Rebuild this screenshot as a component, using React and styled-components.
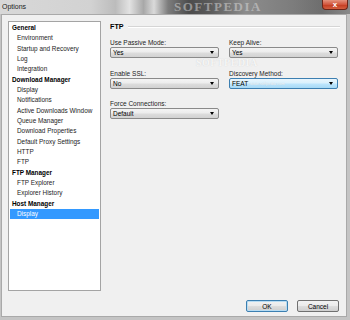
import React from 'react'
import styled, { createGlobalStyle, css } from 'styled-components'

const GlobalStyle = createGlobalStyle`
  html, body {
    margin: 0;
    padding: 0;
    background: #3b6ea8;
  }
  body {
    font-family: "Liberation Sans", Arial, sans-serif;
  }
`

const Window = styled.div`
  display: flex;
  flex-direction: column;
  width: 350px;
  height: 320px;
  background: #c4c4c4;
  overflow: hidden;
`

const TitleBar = styled.div`
  position: relative;
  display: flex;
  align-items: flex-start;
  height: 14px;
  flex-shrink: 0;
  background: linear-gradient(
    90deg,
    #d8d8d8 0,
    #d2d2d2 26%,
    #bcbcbc 33%,
    #e2e2e2 37%,
    #a8a8a8 41%,
    #dadada 44%,
    #7d7d7d 48%,
    #4c4c4c 54%,
    #5a5a5a 60%,
    #8c8c8c 70%,
    #7c7c7c 84%,
    #6e6e6e 92%,
    #8a8a8a 100%
  );
`

const Title = styled.span`
  padding: 3px 0 0 2px;
  font-size: 7px;
  line-height: 8px;
  color: #1a1a1a;
`

const TitleMark = styled.span`
  position: absolute;
  left: 174px;
  top: 0;
  font-family: "Liberation Serif", serif;
  font-size: 13px;
  line-height: 14px;
  font-weight: bold;
  letter-spacing: 1.5px;
  color: rgba(220, 220, 220, 0.5);
`

const CloseButton = styled.div`
  margin-left: auto;
  margin-right: 2px;
  width: 26px;
  height: 10px;
  display: flex;
  align-items: center;
  justify-content: center;
  background: linear-gradient(#e4937e, #d2553c 50%, #c23a1f 51%, #d35e3f);
  border: 1px solid #6d2518;
  border-top: none;
  border-radius: 0 0 4px 4px;
  box-sizing: border-box;
  color: #fff;
  font-size: 8px;
  font-weight: bold;
  line-height: 8px;
`

const Frame = styled.div`
  flex: 1;
  display: flex;
  flex-direction: column;
  background: #f0f0f0;
  margin: 0 3px 3px 1px;
  border: 1px solid #a9a9a9;
  padding: 6px 5px 0 6px;
`

const Main = styled.div`
  display: flex;
  gap: 9px;
  height: 270px;
`

const Tree = styled.div`
  width: 93px;
  box-sizing: border-box;
  background: #fff;
  border: 1px solid #a4a4a4;
  padding: 1px 1px;
`

const TreeItem = styled.div`
  height: 10.33px;
  line-height: 10.33px;
  font-size: 6.4px;
  white-space: nowrap;
  color: #1c1c1c;
  padding-left: 2px;
  ${p => p.$group && css`
    font-weight: bold;
    color: #000;
  `}
  ${p => p.$child && css`
    padding-left: 7px;
  `}
  ${p => p.$selected && css`
    background: #3399ff;
    color: #fff;
  `}
`

const Panel = styled.div`
  position: relative;
  flex: 1;
  padding-top: 1px;
`

const Heading = styled.div`
  display: flex;
  align-items: center;
  gap: 4px;
  height: 9px;
  font-size: 7.2px;
  font-weight: bold;
  color: #000;
`

const HeadingRule = styled.div`
  flex: 1;
  height: 0;
  border-top: 1px solid #d5d5d5;
  border-bottom: 1px solid #fff;
  margin-right: 1px;
`

const Fields = styled.div`
  display: grid;
  grid-template-columns: 109px 109px;
  column-gap: 10px;
  row-gap: 10.5px;
  margin-top: 7px;
`

const Field = styled.div`
  display: flex;
  flex-direction: column;
`

const Label = styled.div`
  font-size: 6.5px;
  line-height: 9px;
  color: #1c1c1c;
`

const Select = styled.div`
  display: flex;
  align-items: center;
  justify-content: space-between;
  height: 11px;
  box-sizing: border-box;
  padding: 0 4px 0 2px;
  border: 1px solid #8a8a8a;
  border-radius: 2px;
  background: linear-gradient(#f4f4f4, #ececec 48%, #dddddd 52%, #d2d2d2);
  font-size: 6.5px;
  color: #000;
  ${p => p.$hot && css`
    border-color: #3c7fb1;
    background: linear-gradient(#eaf6fd, #d9f0fc 48%, #bee6fd 52%, #a7d9f5);
  `}
`

const Arrow = styled.span`
  width: 0;
  height: 0;
  border-left: 2.5px solid transparent;
  border-right: 2.5px solid transparent;
  border-top: 3px solid #000;
`

const Watermark = styled.span`
  position: absolute;
  left: ${p => p.$x}px;
  top: ${p => p.$y}px;
  pointer-events: none;
  white-space: nowrap;
  color: rgba(255, 255, 255, 0.8);
  text-shadow: 0 0 1px rgba(160, 160, 160, 0.45);
  ${p => p.$big ? css`
    font-family: "Liberation Serif", serif;
    font-size: 10px;
    line-height: 10px;
    font-weight: bold;
    letter-spacing: 0.5px;
  ` : css`
    font-size: 4px;
    line-height: 5px;
  `}
`

const Footer = styled.div`
  display: flex;
  justify-content: flex-end;
  gap: 9px;
  margin-top: 9px;
  padding-right: 2px;
`

const Button = styled.div`
  width: 42px;
  height: 12px;
  box-sizing: border-box;
  display: flex;
  align-items: center;
  justify-content: center;
  border: 1px solid #707070;
  border-radius: 2px;
  background: linear-gradient(#f2f2f2, #ebebeb 48%, #dddddd 52%, #cfcfcf);
  font-size: 6.5px;
  color: #000;
  ${p => p.$default && css`
    border-color: #3c7fb1;
    box-shadow: inset 0 0 0 1px #b8dcf2;
  `}
`

const treeItems = [
  { text: 'General', group: true },
  { text: 'Environment' },
  { text: 'Startup and Recovery' },
  { text: 'Log' },
  { text: 'Integration' },
  { text: 'Download Manager', group: true },
  { text: 'Display' },
  { text: 'Notifications' },
  { text: 'Active Downloads Window' },
  { text: 'Queue Manager' },
  { text: 'Download Properties' },
  { text: 'Default Proxy Settings' },
  { text: 'HTTP' },
  { text: 'FTP' },
  { text: 'FTP Manager', group: true },
  { text: 'FTP Explorer' },
  { text: 'Explorer History' },
  { text: 'Host Manager', group: true },
  { text: 'Display', selected: true },
]

const fields = [
  { label: 'Use Passive Mode:', value: 'Yes' },
  { label: 'Keep Alive:', value: 'Yes' },
  { label: 'Enable SSL:', value: 'No' },
  { label: 'Discovery Method:', value: 'FEAT', hot: true },
  { label: 'Force Connections:', value: 'Default' },
]

const App = () => (
  <>
    <GlobalStyle />
    <Window>
      <TitleBar>
        <Title>Options</Title>
        <TitleMark>SOFTPEDIA</TitleMark>
        <CloseButton>x</CloseButton>
      </TitleBar>
      <Frame>
        <Main>
          <Tree>
            {treeItems.map((item, i) => (
              <TreeItem
                key={i}
                $group={item.group}
                $child={!item.group}
                $selected={item.selected}
              >
                {item.text}
              </TreeItem>
            ))}
          </Tree>
          <Panel>
            <Heading>
              FTP
              <HeadingRule />
            </Heading>
            <Fields>
              {fields.map(f => (
                <Field key={f.label}>
                  <Label>{f.label}</Label>
                  <Select $hot={f.hot}>
                    {f.value}
                    <Arrow />
                  </Select>
                </Field>
              ))}
            </Fields>
            <Watermark $big $x={86} $y={37}>SOFTPEDIA</Watermark>
            <Watermark $x={140} $y={60}>www.softpedia.com</Watermark>
          </Panel>
        </Main>
        <Footer>
          <Button $default>OK</Button>
          <Button>Cancel</Button>
        </Footer>
      </Frame>
    </Window>
  </>
)

export default App
